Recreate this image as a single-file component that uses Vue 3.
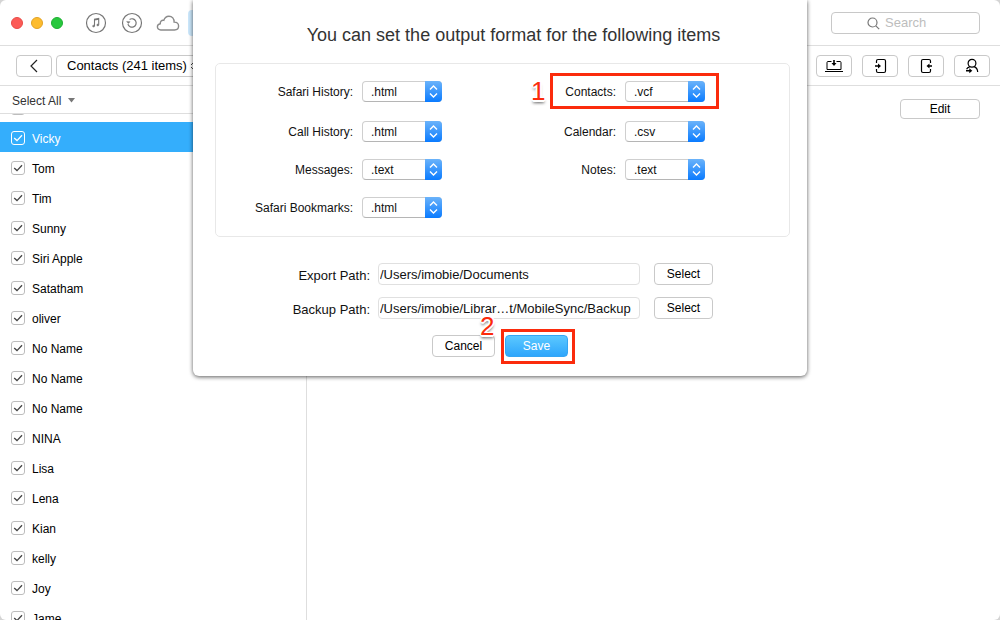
<script setup>
import { ref } from 'vue'

const people = ref([
  { name: '', checked: true },
  ...['Vicky', 'Tom', 'Tim', 'Sunny', 'Siri Apple', 'Satatham', 'oliver', 'No Name', 'No Name', 'No Name', 'NINA', 'Lisa', 'Lena', 'Kian', 'kelly', 'Joy', 'Jame'].map((name) => ({ name, checked: true }))
])
const selected = ref(1)

const columns = ref([
  [
    { id: 'safari', label: 'Safari History:', value: '.html' },
    { id: 'calls', label: 'Call History:', value: '.html' },
    { id: 'messages', label: 'Messages:', value: '.text' },
    { id: 'bookmarks', label: 'Safari Bookmarks:', value: '.html' }
  ],
  [
    { id: 'contacts', label: 'Contacts:', value: '.vcf', step: '1' },
    { id: 'calendar', label: 'Calendar:', value: '.csv' },
    { id: 'notes', label: 'Notes:', value: '.text' }
  ]
])

const paths = ref([
  { id: 'export', label: 'Export Path:', value: '/Users/imobie/Documents' },
  { id: 'backup', label: 'Backup Path:', value: '/Users/imobie/Librar…t/MobileSync/Backup' }
])
</script>

<template>
  <div class="window">
    <header class="titlebar">
      <div class="lights">
        <button class="light close" aria-label="Close"></button>
        <button class="light minimize" aria-label="Minimize"></button>
        <button class="light zoom" aria-label="Zoom"></button>
      </div>
      <nav class="sources">
        <button class="plain" aria-label="Media">
          <svg width="24" height="24" viewBox="0 0 24 24" fill="none" stroke="#777">
            <circle cx="12" cy="12" r="9.5" stroke-width="1.2" />
            <path d="M10.500 15V8.300l4.200-.8v6.300M10.500 9l4.200-.8" stroke-width="1.1" />
            <ellipse cx="9.600" cy="15.100" rx="1" ry=".9" fill="#777" stroke-width=".6" />
            <ellipse cx="13.800" cy="14" rx="1" ry=".9" fill="#777" stroke-width=".6" />
          </svg>
        </button>
        <button class="plain" aria-label="Backups">
          <svg width="24" height="24" viewBox="0 0 24 24" fill="none" stroke="#777">
            <circle cx="12" cy="12" r="9.500" stroke-width="1.200" />
            <path d="M9.600 8.500a4.200 4.200 0 1 1-1.700 4.600" stroke-width="1.200" />
            <path d="M6.600 10.400 8.200 12.600 10.200 10.700z" fill="#777" stroke-width=".4" />
          </svg>
        </button>
        <button class="plain" aria-label="iCloud">
          <svg width="24" height="24" viewBox="0 0 24 24" fill="none" stroke="#8a8a8a" stroke-width="1.400">
            <path d="M4.800 19C2.700 19 1.400 17.600 1.400 15.800c0-1.700 1.200-2.900 2.900-3.100C4 10.300 5.700 8.900 7.800 9.400 8.600 6.700 10.500 5.200 12.900 5.200c3.300 0 5.400 2.400 5.200 5.900 2.700 0 4.500 1.600 4.500 4 0 2.300-1.700 3.900-4.100 3.900z" />
          </svg>
        </button>
        <button class="plain active" aria-label="Device"></button>
      </nav>
      <div class="search">
        <svg width="14" height="14" viewBox="0 0 14 14" fill="none" stroke="#777" stroke-width="1.2">
          <circle cx="5.500" cy="5.500" r="4.500" />
          <path d="M8.800 8.800 12.200 12.200" />
        </svg>
        <input type="text" placeholder="Search" aria-label="Search" />
      </div>
    </header>

    <div class="toolbar">
      <button class="btn tool" aria-label="Back">
        <svg width="16" height="16" viewBox="0 0 16 16" fill="none" stroke="#222" stroke-width="1.2"><path d="M11 2 5 8l6 6" /></svg>
      </button>
      <button class="btn category">
        Contacts (241 items)
        <svg width="8" height="10" viewBox="0 0 8 10" fill="none" stroke="#444"><path d="M1 4l3-3 3 3M1 6l3 3 3-3" /></svg>
      </button>
      <div class="actions">
        <button class="btn tool" aria-label="Export to computer">
          <svg width="20" height="16" viewBox="0 0 20 16" fill="none" stroke="#000">
            <path d="M7.500 3.500H4q-1 0-1 1v7h14v-7q0-1-1-1h-3.500" />
            <path d="M1 13.500h18" />
            <path d="M10 2v5" stroke-width="1.600" />
            <path d="M7.500 5h5L10 8z" fill="#000" stroke="none" />
          </svg>
        </button>
        <button class="btn tool" aria-label="Export to device">
          <svg width="20" height="16" viewBox="0 0 20 16" fill="none" stroke="#000" stroke-width="1.200">
            <path d="M6.500 5V3q0-1.500 1.500-1.500h6q1.500 0 1.500 1.500v10q0 1.500-1.500 1.500H8q-1.500 0-1.500-1.500v-2" />
            <path d="M5 8h4" stroke-width="1.600" />
            <path d="M8 5.500v5L11 8z" fill="#000" stroke="none" />
          </svg>
        </button>
        <button class="btn tool" aria-label="Import from device">
          <svg width="20" height="16" viewBox="0 0 20 16" fill="none" stroke="#000" stroke-width="1.200">
            <path d="M14.500 5V3q0-1.500-1.500-1.500H7Q5.500 1.500 5.500 3v10q0 1.500 1.500 1.500h6q1.500 0 1.500-1.500v-2" />
            <path d="M12.500 8H16" stroke-width="1.600" />
            <path d="M13.500 5.500v5L10.500 8z" fill="#000" stroke="none" />
          </svg>
        </button>
        <button class="btn tool" aria-label="Export contact">
          <svg width="20" height="16" viewBox="0 0 20 16" fill="none" stroke="#000" stroke-width="1.200">
            <circle cx="10" cy="5.300" r="3.900" />
            <path d="M8 8.600C6.200 9.100 5 10 4.600 11.300M12 8.600c2.200.7 3.500 2.500 3.700 5.400" />
            <path d="M4 12.700h4" stroke-width="1.600" />
            <path d="M7.300 10.200v5l3-2.500z" fill="#000" stroke="none" />
          </svg>
        </button>
      </div>
    </div>

    <div class="body">
      <aside class="sidebar">
        <button class="select-all">Select All
          <svg width="7" height="5" viewBox="0 0 7 5"><path d="M0 0h7L3.500 4.500z" fill="#777" /></svg>
        </button>
        <div class="viewport">
          <ul class="people">
            <li v-for="(person, i) in people" :key="i" :class="{ current: i === selected }">
              <input :id="'p' + i" v-model="person.checked" type="checkbox" :aria-label="person.name || 'Contact'" />
              <label :for="'p' + i">{{ person.name }}</label>
              <svg class="tick" width="14" height="14" viewBox="0 0 14 14" fill="none" stroke="currentColor" stroke-width="1.300"><path d="M3.200 7 6 9.600 11 4.200" /></svg>
            </li>
          </ul>
        </div>
      </aside>
      <main class="detail">
        <button class="btn edit">Edit</button>
      </main>
    </div>

    <div class="overlay">
      <form class="dialog" role="dialog" aria-labelledby="title" @submit.prevent>
        <h1 id="title">You can set the output format for the following items</h1>
        <section class="formats">
          <div v-for="(column, c) in columns" :key="c" class="column">
            <div v-for="field in column" :key="field.id" class="field">
              <label :for="field.id">{{ field.label }}</label>
              <div class="popup">
                <select :id="field.id" v-model="field.value">
                  <option>{{ field.value }}</option>
                </select>
                <span class="arrows">
                  <svg width="17" height="21" viewBox="0 0 17 21" fill="none" stroke="#fff" stroke-width="1.400"><path d="M5 8.500 8.500 5 12 8.500M5 12.500 8.500 16 12 12.500" /></svg>
                </span>
              </div>
              <span v-if="field.step" class="callout"><b class="step">{{ field.step }}</b></span>
            </div>
          </div>
        </section>
        <section class="paths">
          <div v-for="path in paths" :key="path.id" class="path">
            <label :for="path.id">{{ path.label }}</label>
            <input :id="path.id" v-model="path.value" type="text" />
            <button type="button" class="btn">Select</button>
          </div>
        </section>
        <footer>
          <button type="button" class="btn">Cancel</button>
          <div class="save-wrap">
            <button type="submit" class="btn save">Save</button>
            <span class="callout"><b class="step">2</b></span>
          </div>
        </footer>
      </form>
    </div>
  </div>
</template>

<style>
body { background: #d4d4d4; }
</style>

<style scoped>
* { box-sizing: border-box; }
.window {
  position: relative;
  display: flex;
  flex-direction: column;
  height: 100vh;
  overflow: hidden;
  background: #fff;
  border-radius: 6px;
  color: #111;
  font: 12px/16px "Liberation Sans", Arial, sans-serif;
}
button, input, select { font: inherit; color: inherit; }
button { padding: 0; border: 0; background: none; }
svg { display: block; }
.titlebar {
  display: flex;
  align-items: center;
  flex: none;
  height: 46px;
  padding: 0 20px 0 11px;
  border-bottom: 1px solid #dedede;
}
.lights { display: flex; gap: 8px; }
.light { width: 12px; height: 12px; border-radius: 50%; }
.close { background: #fc5b57; border: 1px solid #e94b47; }
.minimize { background: #fdbc2e; border: 1px solid #e2a325; }
.zoom { background: #28c83e; border: 1px solid #1eb032; }
.sources { display: flex; align-items: center; gap: 12px; margin-left: 21px; }
.plain { width: 24px; height: 24px; }
.plain.active { width: 36px; height: 26px; margin-left: -4px; border-radius: 4px; background: #cbe7fb; }
.search { position: relative; width: 149px; margin-left: auto; }
.search input {
  display: block;
  width: 100%;
  height: 22px;
  padding: 0 6px 0 53px;
  border: 1px solid #c8c8c8;
  border-radius: 4px;
  background: #fff;
  font-size: 13px;
}
.search input::placeholder { color: #bdbdbd; }
.search svg { position: absolute; left: 36px; top: 5px; }
.toolbar {
  display: flex;
  align-items: center;
  gap: 4px;
  flex: none;
  height: 40px;
  padding: 0 10px 0 16px;
  border-bottom: 1px solid #dedede;
}
.btn {
  height: 22px;
  border: 1px solid #c9c9c9;
  border-radius: 4px;
  background: #fff;
  color: #000;
}
.tool { display: flex; align-items: center; justify-content: center; width: 36px; }
.category { display: flex; align-items: center; gap: 3px; padding: 0 10px; font-size: 13px; white-space: nowrap; }
.actions { display: flex; gap: 10px; margin-left: auto; }
.body { display: flex; flex: 1; min-height: 0; }
.sidebar {
  display: flex;
  flex-direction: column;
  flex: none;
  width: 307px;
  border-right: 1px solid #dedede;
}
.select-all {
  display: flex;
  align-items: center;
  gap: 7px;
  flex: none;
  height: 28px;
  padding: 2px 12px 0;
  border-bottom: 1px solid #dedede;
  color: #333;
}
.viewport { flex: 1; min-height: 0; overflow: hidden; }
.people { margin: -22px 0 0; padding: 0; list-style: none; }
.people li { position: relative; display: flex; align-items: center; gap: 7px; height: 30px; padding: 2px 11px 0; color: #444; }
.people input {
  appearance: none;
  width: 14px;
  height: 14px;
  margin: 0;
  border: 1px solid #bdbdbd;
  border-radius: 3px;
}
.people label { padding-top: 2px; color: #000; }
.people .current { background: #34aefc; color: #fff; }
.people .current label { color: #fff; }
.people .current input { border-color: #fff; }
.tick { position: absolute; left: 11px; top: 9px; pointer-events: none; }
.people input:not(:checked) ~ .tick { display: none; }
.detail { flex: 1; padding: 13px 20px; text-align: right; }
.edit { width: 80px; height: 20px; }
.overlay { position: absolute; inset: 0 0 auto; display: flex; justify-content: center; }
.dialog {
  width: 100%;
  max-width: 614px;
  padding: 24px 17px 19px 22px;
  border-radius: 0 0 6px 6px;
  background: #fff;
  box-shadow: 0 1px 4px rgba(0, 0, 0, .65);
}
h1 { margin: 0 0 17px; padding-left: 22px; font-size: 18px; line-height: 22px; font-weight: 400; text-align: center; color: #333; }
.formats { display: flex; padding: 17px 0 18px; border: 1px solid #e8e8e8; border-radius: 5px; }
.column { display: flex; flex-direction: column; gap: 17px; width: 226px; }
.column + .column { width: 263px; }
.field { position: relative; display: flex; align-items: center; justify-content: flex-end; gap: 9px; }
.field:first-child { margin-bottom: 2px; }
.popup { position: relative; width: 80px; height: 21px; }
.popup select {
  appearance: none;
  display: block;
  width: 100%;
  height: 100%;
  padding: 1px 20px 0 8px;
  border: 1px solid #cfcfcf;
  border-bottom-color: #b5b5b5;
  border-radius: 4px;
  background: #fff;
}
.arrows {
  position: absolute;
  inset: 0 0 0 auto;
  border-radius: 0 4px 4px 0;
  background: linear-gradient(#6bb3fa, #0a7bff);
  pointer-events: none;
}
.callout { position: absolute; border: 3px solid #fb2b0c; pointer-events: none; }
.field .callout { left: 108px; right: -14px; top: -8px; bottom: -7px; }
.save-wrap .callout { inset: -6px -7px -7px -4px; }
.step {
  position: absolute;
  color: #fb2b0c;
  font-size: 26px;
  line-height: 26px;
  font-weight: 400;
  text-shadow: -1px -1px 0 #fff, 1px -1px 0 #fff, -1px 1px 0 #fff, 1px 1px 0 #fff, 2px 0 0 #fff, -2px 0 0 #fff, 0 2px 0 #fff, 0 3px 3px #555;
}
.field .step { left: -22px; top: 2px; }
.save-wrap .step { left: -24px; top: -19px; }
.paths { display: grid; gap: 12px; margin-top: 26px; }
.path { display: flex; align-items: center; font-size: 13px; }
.path label { width: 155px; margin-right: 8px; padding-top: 4px; text-align: right; }
.path input { width: 262px; height: 22px; margin-right: 14px; padding: 0 1px; border: 1px solid #e0e0e0; border-radius: 4px; background: #fff; }
.path .btn { width: 59px; font-size: 12px; }
footer { display: flex; gap: 10px; margin: 16px 0 0 217px; }
footer .btn { width: 63px; }
.save-wrap { position: relative; }
.save { display: block; border-color: #35a5f3; background: linear-gradient(#5bc8ff, #2ea6fc); color: #fff; }
</style>
